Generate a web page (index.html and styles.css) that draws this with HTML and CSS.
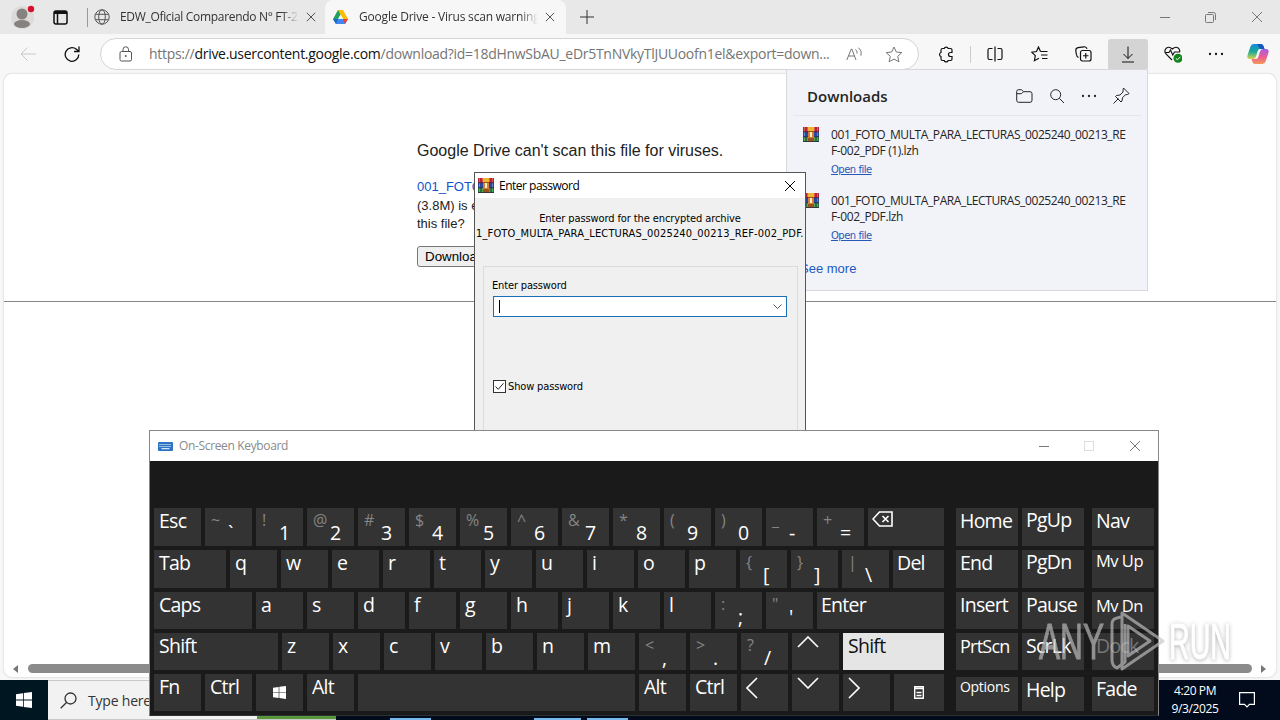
FILE: index.html
```html
<!DOCTYPE html>
<html lang="en">
<head>
	<meta charset="UTF-8">
	<meta name="viewport" content="width=device-width, initial-scale=1.0">
	<title>Google Drive - Virus scan warning</title>
	<link rel="stylesheet" href="styles.css">
</head>
<body>
	<svg class="defs">
		<symbol id="icon_rar" viewBox="0 0 16 15">
			<g stroke="none">
				<rect width="16" height="5" fill="#b3243b"/>
				<path d="M1 0h1v4H1zM4 0h1v4H4zM11 0h1v4h-1zM14 0h1v4h-1z" fill="#dc5a48"/>
				<rect y="5" width="16" height="5" fill="#2a479e"/>
				<path d="M1 5h1v4H1zM14 5h1v4h-1z" fill="#6386cd"/>
				<rect y="10" width="16" height="5" fill="#28733c"/>
				<path d="M1 10h1v4H1zM4 10h1v4H4zM11 10h1v4h-1zM14 10h1v4h-1z" fill="#55a85b"/>
				<rect x="5" width="6" height="15" fill="#99521f"/>
				<rect x="5" width="6" height="4" fill="#edb431"/>
				<rect x="5" y="5" width="6" height="6" fill="#d97c35"/>
				<rect x="7" y="5" width="2" height="5" fill="#fff0c0"/>
				<path d="M0 4.500h5v.7H0zM11 4.500h5v.7h-5zM0 9.500h5v.7H0zM11 9.500h5v.7h-5zM0 14.300h16v.7H0z" fill="#2e2740"/>
			</g>
		</symbol>
		<symbol id="icon_x" viewBox="0 0 12 12"><path d="M1 1l10 10M11 1L1 11"/></symbol>
		<symbol id="icon_dots" viewBox="0 0 16 16"><path d="M2 8h0M8 8h0M14 8h0" stroke-width="2.3" stroke-linecap="round"/></symbol>
		<symbol id="icon_win" viewBox="0 0 16 16"><path d="M0 2.2L7 1.2V7.6H0zM7.8 1L16 0V7.6H7.8zM0 8.4H7V14.8L0 13.8zM7.8 8.4H16V16L7.8 14.9z" fill="#fff" stroke="none"/></symbol>
	</svg>

	<div id="browser">
		<div class="tab_strip">
			<svg class="avatar" width="24" height="24" viewBox="0 0 24 24"><circle cx="11.5" cy="12.5" r="11.5" fill="#dddbd9" stroke="none"/><circle cx="11" cy="9" r="5.5" fill="#858280" stroke="none"/><ellipse cx="11" cy="19" rx="8" ry="4" fill="#858280" stroke="none"/><circle cx="20" cy="4" r="3.2" fill="#d5102b" stroke="none"/></svg>
			<svg class="workspace" width="15" height="15" viewBox="0 0 15 15"><rect x="1" y="1" width="13" height="13" rx="2" stroke-width="1.5"/><path d="M1 2.500h13" stroke-width="3"/><path d="M4.500 3v11" stroke-width="1.5"/></svg>
			<div class="tab tab_first">
				<svg width="16" height="16" viewBox="0 0 16 16" color="#555"><circle cx="8" cy="8" r="7.2"/><ellipse cx="8" cy="8" rx="3.3" ry="7.2"/><path d="M1.5 5.3h13M1.5 10.7h13"/></svg>
				<span class="tab_title">EDW_Oficial Comparendo N° FT-2</span>
				<svg width="10" height="10"><use href="#icon_x"/></svg>
			</div>
			<div class="tab tab_active">
				<svg width="15" height="14" viewBox="0 0 15 14"><path d="M5 0h5L3 14 0 9z" fill="#21a15b" stroke="none"/><path d="M5 0h5l5 9H10z" fill="#fbbc04" stroke="none"/><path d="M3 9h12l-3 5H3z" fill="#4285f4" stroke="none"/><path d="M10 9h5l-3 5z" fill="#ea4335" stroke="none"/><path d="M0 9h5L3 14z" fill="#1967d2" stroke="none"/><path d="M7.500 4.500L10 9H5z" fill="#f7f7f7" stroke="none"/></svg>
				<span class="tab_title">Google Drive - Virus scan warning</span>
				<svg width="10" height="10"><use href="#icon_x"/></svg>
			</div>
			<svg class="new_tab" width="14" height="14" viewBox="0 0 14 14"><path d="M7 0v14M0 7h14"/></svg>
			<div class="window_buttons">
				<svg width="10" height="10" viewBox="0 0 10 10"><path d="M0 5.5h10"/></svg>
				<svg width="11" height="11" viewBox="0 0 11 11"><rect x=".5" y="2.5" width="8" height="8" rx="1"/><path d="M3 .5h5.500q2 0 2 2V8"/></svg>
				<svg width="12" height="12"><use href="#icon_x"/></svg>
			</div>
		</div>

		<div class="toolbar">
			<svg class="back" width="16" height="14" viewBox="0 0 16 14"><path d="M7.500 .5L1 7l6.500 6.500M1 7h15"/></svg>
			<svg class="reload" width="16" height="17" viewBox="0 0 16 17"><path d="M14.800 8.500a6.800 6.800 0 1 1-2.400-5.200L15 5.500M15 .5v5H10" stroke-width="1.3"/></svg>
			<div class="address">
				<svg width="14" height="16" viewBox="0 0 14 16" color="#555"><rect x="1" y="5.500" width="11.500" height="9.500" rx="1.500"/><path d="M4 5.500V3.500a2.700 2.700 0 0 1 5.500 0v2"/><circle cx="6.750" cy="10" r=".6" fill="#555"/></svg>
				<span class="url">https://<b>drive.usercontent.google.com</b>/download?id=18dHnwSbAU_eDr5TnNVkyTlJUUoofn1el&amp;export=down...</span>
				<svg class="read_aloud" width="17" height="15" viewBox="0 0 17 15"><path d="M.8 13L5.300 2h.5L10 13M2.300 9h6.300M9.500 2.500q2 1.500 1.500 4M12.500 .7q4 3 2.500 8"/></svg>
				<svg class="star" width="18" height="17" viewBox="0 0 18 17"><path d="M9 1l2.300 5 5.500.6-4.100 3.700 1.200 5.500L9 13.100l-4.900 2.700 1.200-5.500L1.200 6.600 6.700 6z"/></svg>
			</div>
			<div class="tools">
				<svg width="17" height="17" viewBox="0 0 17 17"><path d="M4.500 2.500h1.700a2.100 2.100 0 0 1 4 0H12.500q1.500 0 1.500 1.500v2.500h-1.500a1.900 1.900 0 0 0 0 4H14V13q0 1.500-1.500 1.500H10.200a2.100 2.100 0 0 1-4 0H4.500Q3 14.500 3 13v-2.500a2.100 2.100 0 0 1 0-4V4Q3 2.500 4.500 2.500z" stroke-width="1.200"/></svg>
				<i class="divider"></i>
				<svg width="16" height="16" viewBox="0 0 16 16"><path d="M5.500 2.500H2.500q-1.500 0-1.500 1.500v8q0 1.500 1.500 1.500h3M10.500 2.500h3q1.500 0 1.500 1.500v8q0 1.500-1.500 1.500h-3M8 .5v15" stroke-width="1.200"/></svg>
				<svg width="17" height="16" viewBox="0 0 17 16"><path d="M9.500 5.500L7.500 1 5.500 5.500.8 6.200l3.500 3.500-.9 5L8 12.300M9.500 5.500h7M10 9h6.500M11 12.500h5.500" stroke-width="1.200"/></svg>
				<svg width="17" height="16" viewBox="0 0 17 16"><rect x="5.500" y="4.500" width="10.500" height="10.500" rx="2" stroke-width="1.200"/><path d="M10.750 7v5.500M8 9.750h5.500M3.500 11.500Q1.800 11 1.300 8L.8 4.500Q.7 2 3 1.600L9 .8q2.500-.3 3 2" stroke-width="1.200"/></svg>
				<span class="download_button"><svg width="14" height="17" viewBox="0 0 14 17"><path d="M7 .5v12M2.500 8L7 12.500 11.500 8M1 16h12"/></svg></span>
				<svg class="health" width="18" height="17" viewBox="0 0 18 17"><path d="M.5 6.500H5L6.500 4l2.300 5L10.500 6H16M8 14L2 8Q-.5 4.500 2.500 2 5.500 0 8.300 3 11.500 0 14.200 2q2 1.800 1.500 4" stroke-width="1.100"/><circle cx="14" cy="12.300" r="4.500" fill="#12831d" stroke="none"/><path d="M11.800 12.300l1.600 1.500 3-3" stroke="#fff"/></svg>
				<svg class="more" width="16" height="16"><use href="#icon_dots"/></svg>
				<svg class="copilot" width="22" height="20" viewBox="0 0 22 20"><defs><linearGradient id="cp_a" x1="0" y1="0" x2="0" y2="1"><stop offset="0" stop-color="#1889dc"/><stop offset=".5" stop-color="#17a99a"/><stop offset="1" stop-color="#d9d34b"/></linearGradient><linearGradient id="cp_b" x1="0" y1="0" x2="0" y2="1"><stop offset="0" stop-color="#a45de4"/><stop offset=".55" stop-color="#ee5d91"/><stop offset="1" stop-color="#f39a55"/></linearGradient></defs><g stroke="none"><path d="M7 0h7q2 0 2.700 2.500L17.500 5H13q-1.700 0-2.300 2L9 12.500Q8.300 15 6 15H3Q-.5 15 .6 11L3.300 3Q4.300 0 7 0z" fill="url(#cp_a)"/><path d="M15 20H8q-2 0-2.700-2.500L4.500 15H9q1.700 0 2.300-2L13 7.500Q13.700 5 16 5h3q3.500 0 2.400 4l-2.700 8Q17.700 20 15 20z" fill="url(#cp_b)"/><path d="M7 0h7q2 0 2.700 2.500L17.500 5H13L10 0z" fill="#1558bd"/></g></svg>
			</div>
		</div>

		<div class="page">
			<div class="warning">
				<h1>Google Drive can't scan this file for viruses.</h1>
				<p><a>001_FOTO_</a></p>
				<p>(3.8M) is e</p>
				<p>this file?</p>
				<button>Download</button>
			</div>
			<hr>
			<div class="scrollbar">
				<svg width="5" height="8" viewBox="0 0 5 8"><path d="M5 0v8L0 4z" fill="#777" stroke="none"/></svg>
				<div class="scroll_thumb"></div>
				<svg width="5" height="8" viewBox="0 0 5 8"><path d="M0 0v8l5-4z" fill="#777" stroke="none"/></svg>
			</div>
		</div>
	</div>

	<div id="downloads">
		<div class="downloads_header">
			<h2>Downloads</h2>
			<svg width="17" height="14" viewBox="0 0 17 14"><path d="M.7 11V2.500Q.7.700 2.500.700H5.500L7.500 2.700H14q2 0 2 2V11.300q0 2-2 2H2.700q-2 0-2-2zM.7 4.700H5.500L7.500 2.700"/></svg>
			<svg width="16" height="16" viewBox="0 0 16 16"><circle cx="6.700" cy="6.700" r="5"/><path d="M10.300 10.300L15 15"/></svg>
			<svg width="16" height="16"><use href="#icon_dots"/></svg>
			<svg width="17" height="17" viewBox="0 0 17 17"><path d="M10.500 1L16 6.500l-1.500 1-2 .2-3 3-.5 3.300-1 1L2.500 9.500l1-1L7 8l3-3 .1-2.500zM5.300 11.700L.5 16.500"/></svg>
		</div>
		<div class="download">
			<svg width="16" height="15"><use href="#icon_rar"/></svg>
			<div>
				<p>001_FOTO_MULTA_PARA_LECTURAS_0025240_00213_RE<br>F-002_PDF (1).lzh</p>
				<a>Open file</a>
			</div>
		</div>
		<div class="download">
			<svg width="16" height="15"><use href="#icon_rar"/></svg>
			<div>
				<p>001_FOTO_MULTA_PARA_LECTURAS_0025240_00213_RE<br>F-002_PDF.lzh</p>
				<a>Open file</a>
			</div>
		</div>
		<a class="see_more">See more</a>
	</div>

	<div id="password_dialog">
		<div class="dialog_title">
			<svg width="16" height="15"><use href="#icon_rar"/></svg>
			<span>Enter password</span>
			<svg class="close" width="12" height="12"><use href="#icon_x"/></svg>
		</div>
		<p class="dialog_prompt">Enter password for the encrypted archive</p>
		<p class="dialog_file">1_FOTO_MULTA_PARA_LECTURAS_0025240_00213_REF-002_PDF.</p>
		<div class="dialog_group">
			<span class="field_label">Enter password</span>
			<div class="combo">
				<i class="caret"></i>
				<svg width="9" height="5" viewBox="0 0 9 5"><path d="M.5.500l4 4 4-4"/></svg>
			</div>
			<div class="checkbox">
				<svg width="13" height="13" viewBox="0 0 13 13"><rect x=".5" y=".5" width="12" height="12" fill="#fff" stroke="#333"/><path d="M2.500 6.500l2.700 2.800 5.300-6" stroke="#222"/></svg>
				<span>Show password</span>
			</div>
		</div>
	</div>

	<div id="taskbar">
		<div class="start"><svg width="16" height="16"><use href="#icon_win"/></svg></div>
		<div class="search">
			<svg width="17" height="17" viewBox="0 0 17 17"><circle cx="10.500" cy="6.500" r="5.500" stroke-width="1.300"/><path d="M6.500 10.500L.7 16.300" stroke-width="1.300"/></svg>
			<span>Type here</span>
			<i class="search_picture"></i>
		</div>
		<div class="tasks"><i></i><i></i><i></i></div>
		<div class="clock">4:20 PM<br>9/3/2025</div>
		<svg class="notify" width="16" height="16" viewBox="0 0 16 16"><path d="M.6.600h14.800v11.800H10.500L8 15 5.500 12.400H.6z" stroke-width="1.200"/></svg>
	</div>

	<div id="keyboard">
		<div class="keyboard_title">
			<svg width="15" height="9" viewBox="0 0 15 9"><rect width="15" height="9" rx="1" fill="#2d74c4" stroke="none"/><path d="M1.500 2.500h12M1.500 4.500h12" stroke="#fff" stroke-dasharray="1 1"/><path d="M3.500 6.700h8" stroke="#fff"/></svg>
			<span>On-Screen Keyboard</span>
			<div class="window_buttons">
				<svg width="10" height="10" viewBox="0 0 10 10"><path d="M0 5.5h10"/></svg>
				<svg width="10" height="10" viewBox="0 0 10 10"><rect x=".5" y=".5" width="9" height="9" stroke="#ddd"/></svg>
				<svg width="12" height="12"><use href="#icon_x"/></svg>
			</div>
		</div>
		<div class="keyboard_body">
			<div class="keys_main">
				<div class="row">
					<div class="key">Esc</div>
					<div class="key dual"><s>~</s>`</div>
					<div class="key dual"><s>!</s>1</div>
					<div class="key dual"><s>@</s>2</div>
					<div class="key dual"><s>#</s>3</div>
					<div class="key dual"><s>$</s>4</div>
					<div class="key dual"><s>%</s>5</div>
					<div class="key dual"><s>^</s>6</div>
					<div class="key dual"><s>&amp;</s>7</div>
					<div class="key dual"><s>*</s>8</div>
					<div class="key dual"><s>(</s>9</div>
					<div class="key dual"><s>)</s>0</div>
					<div class="key dual"><s>_</s>-</div>
					<div class="key dual"><s>+</s>=</div>
					<div class="key fill"><svg width="21" height="16" viewBox="0 0 21 16"><path d="M7.500 1H20v14H7.500L1 8zM10.500 5l6 6M16.500 5l-6 6"/></svg></div>
				</div>
				<div class="row">
					<div class="key w_tab">Tab</div>
					<div class="key">q</div>
					<div class="key">w</div>
					<div class="key">e</div>
					<div class="key">r</div>
					<div class="key">t</div>
					<div class="key">y</div>
					<div class="key">u</div>
					<div class="key">i</div>
					<div class="key">o</div>
					<div class="key">p</div>
					<div class="key dual"><s>{</s>[</div>
					<div class="key dual"><s>}</s>]</div>
					<div class="key dual"><s>|</s>\</div>
					<div class="key fill">Del</div>
				</div>
				<div class="row">
					<div class="key w_caps">Caps</div>
					<div class="key">a</div>
					<div class="key">s</div>
					<div class="key">d</div>
					<div class="key">f</div>
					<div class="key">g</div>
					<div class="key">h</div>
					<div class="key">j</div>
					<div class="key">k</div>
					<div class="key">l</div>
					<div class="key dual"><s>:</s>;</div>
					<div class="key dual"><s>"</s>'</div>
					<div class="key fill">Enter</div>
				</div>
				<div class="row">
					<div class="key w_shift">Shift</div>
					<div class="key">z</div>
					<div class="key">x</div>
					<div class="key">c</div>
					<div class="key">v</div>
					<div class="key">b</div>
					<div class="key">n</div>
					<div class="key">m</div>
					<div class="key dual"><s>&lt;</s>,</div>
					<div class="key dual"><s>&gt;</s>.</div>
					<div class="key dual"><s>?</s>/</div>
					<div class="key"><svg width="22" height="12" viewBox="0 0 22 12"><path d="M1 11L11 1l10 10"/></svg></div>
					<div class="key fill pressed">Shift</div>
				</div>
				<div class="row">
					<div class="key">Fn</div>
					<div class="key">Ctrl</div>
					<div class="key centered"><svg width="13" height="13"><use href="#icon_win"/></svg></div>
					<div class="key">Alt</div>
					<div class="key w_space"></div>
					<div class="key">Alt</div>
					<div class="key">Ctrl</div>
					<div class="key"><svg width="12" height="22" viewBox="0 0 12 22"><path d="M11 1L1 11l10 10"/></svg></div>
					<div class="key"><svg width="22" height="12" viewBox="0 0 22 12"><path d="M1 1l10 10L21 1"/></svg></div>
					<div class="key"><svg width="12" height="22" viewBox="0 0 12 22"><path d="M1 1l10 10L1 21"/></svg></div>
					<div class="key fill centered"><svg width="10" height="13" viewBox="0 0 10 13"><path d="M.6.600h8.800v11.800H.6zM.5 2.500h9M2.500 6.500h5M2.500 9.500h5"/></svg></div>
				</div>
			</div>
			<div class="keys_side">
				<div class="key">Home</div><div class="key up">PgUp</div><div class="key">Nav</div>
				<div class="key">End</div><div class="key up">PgDn</div><div class="key small">Mv Up</div>
				<div class="key">Insert</div><div class="key">Pause</div><div class="key small low">Mv Dn</div>
				<div class="key medium">PrtScn</div><div class="key">ScrLk</div><div class="key disabled">Dock</div>
				<div class="key tiny">Options</div><div class="key">Help</div><div class="key up">Fade</div>
			</div>
		</div>
	</div>

	<svg id="watermark" width="204" height="68" viewBox="0 0 204 68">
		<text x="4" y="51" textLength="65" lengthAdjust="spacingAndGlyphs">ANY</text>
		<path class="mark_line" d="M86 9l-4 1q-5 1-5 6v36q0 6 5 8l8-6V16"/>
		<path class="mark_line" d="M87 5v56l41-28zM93 18v30l22-15z"/>
		<text class="mark_run" x="134" y="51" textLength="62" lengthAdjust="spacingAndGlyphs">RUN</text>
	</svg>
</body>
</html>
```

FILE: styles.css
```css
* {
	margin: 0;
	padding: 0;
	box-sizing: border-box;
}
html, body {
	width: 100%;
	height: 100%;
	overflow: hidden;
	font-family: "Open Sans", "Noto Sans", sans-serif;
}
body {
	position: relative;
	background: #f3f4fa;
}
svg {
	display: block;
	flex: none;
	fill: none;
	stroke: currentColor;
}
svg.defs {
	display: none;
}

/* browser */
#browser {
	height: 680px;
	display: flex;
	flex-direction: column;
	background: #f7f7f7;
}
.tab_strip {
	height: 34px;
	display: flex;
	align-items: center;
	background: #e8e8e8;
	color: #333;
	font-size: 12px;
}
.avatar {
	margin: -1px 0 0 11px;
}
.workspace {
	margin-left: 18px;
	color: #111;
}
.tab {
	display: flex;
	align-items: center;
	height: 34px;
}
.tab_first {
	width: 239px;
	margin-left: 18px;
	padding-left: 8px;
	background: linear-gradient(#999, #999) 1px 8px / 1px 19px no-repeat;
}
.tab_active {
	width: 241px;
	padding-left: 8px;
	background: #f7f7f7;
	border-radius: 8px 8px 0 0;
}
.tab_title {
	width: 179px;
	margin-left: 10px;
	margin-right: 7px;
	padding-bottom: 1px;
	overflow: hidden;
	white-space: nowrap;
	letter-spacing: -0.32px;
	-webkit-mask-image: linear-gradient(90deg, #000 90%, transparent);
}
.tab_active .tab_title {
	margin-left: 11px;
	letter-spacing: -0.2px;
}
.new_tab {
	margin-left: 14px;
}
.window_buttons {
	display: flex;
	align-items: center;
	gap: 35px;
	margin-left: auto;
	margin-right: 17px;
	color: #777;
}

.toolbar {
	height: 40px;
	display: flex;
	align-items: center;
	color: #111;
}
.back {
	margin-left: 20px;
	color: #c8c8c8;
}
.reload {
	margin-left: 28px;
}
.address {
	width: 819px;
	height: 32px;
	margin-left: 20px;
	padding-left: 18px;
	display: flex;
	align-items: center;
	background: #fff;
	border: 1px solid #d4d4d4;
	border-radius: 16px;
}
.url {
	width: 681px;
	margin-left: 16px;
	padding-bottom: 1px;
	white-space: nowrap;
	font-size: 14px;
	letter-spacing: -0.29px;
	color: #757575;
}
.url b {
	font-weight: normal;
	color: #111;
}
.read_aloud {
	margin-left: 16px;
	color: #777;
}
.star {
	margin-left: 22px;
	color: #777;
}
.tools {
	display: flex;
	align-items: center;
	margin-left: 19px;
}
.divider {
	width: 1px;
	height: 17px;
	margin: 0 16px 0 15px;
	background: #ccc;
}
.tools > svg + svg {
	margin-left: 27.5px;
}
.download_button {
	width: 40px;
	height: 31px;
	margin-left: 16px;
	display: grid;
	place-content: center;
	background: #d4d4d4;
	border-radius: 3px;
}
.tools > .health {
	margin-left: 16px;
}
.tools > .more {
	margin-left: 26px;
}
.tools > .copilot {
	margin-left: 23px;
}

.page {
	flex: 1;
	margin: 0 4px 3px;
	display: flex;
	flex-direction: column;
	background: #fff;
	border-radius: 8px;
	box-shadow: 0 0 2px #bbb;
	font-family: "Liberation Sans", Arial, sans-serif;
	color: #222;
}
.warning {
	height: 227px;
	padding: 66px 0 0 413px;
	font-size: 13px;
}
.warning h1 {
	margin-bottom: 16px;
	font-size: 16px;
	line-height: 22px;
	font-weight: normal;
}
.warning p {
	line-height: 18px;
}
.warning p:first-of-type {
	margin-bottom: 1px;
}
.warning a {
	color: #15c;
}
.warning button {
	height: 21px;
	margin-top: 13px;
	padding: 0 7px;
	font: 13.33px "Liberation Sans", Arial, sans-serif;
	color: #000;
	background: #efefef;
	border: 1px solid #767676;
	border-radius: 3px;
}
.page hr {
	border: 0;
	border-top: 1px solid #888;
}
.scrollbar {
	height: 17px;
	margin-top: auto;
	display: flex;
	align-items: center;
	justify-content: space-between;
	padding: 0 10px 0 9px;
}
.scroll_thumb {
	width: 1224px;
	height: 9px;
	background: #8b8b8b;
	border-radius: 5px;
}

/* downloads flyout */
#downloads {
	position: absolute;
	left: 786px;
	top: 69px;
	width: 362px;
	height: 222px;
	background: #f1f3f8;
	border: 1px solid #d6d8dd;
	color: #242424;
}
.downloads_header {
	height: 46px;
	margin: 0 6px 11px;
	padding: 6px 11px 0 14px;
	display: flex;
	align-items: center;
	gap: 16px;
	border-bottom: 1px solid #e3e6ea;
}
.downloads_header h2 {
	margin-right: auto;
	font-size: 15px;
	font-weight: 600;
	letter-spacing: 0;
}
.download {
	height: 66px;
	display: flex;
	gap: 12px;
	padding-left: 16px;
}
.download p {
	font-size: 12px;
	line-height: 16px;
	letter-spacing: -0.4px;
	white-space: nowrap;
}
.download p::first-line {
	letter-spacing: -0.4px;
}
.download a {
	display: block;
	margin-top: 4px;
	font: 10px/14px "DejaVu Sans", sans-serif;
	letter-spacing: -0.5px;
	color: #2758b8;
	text-decoration: underline;
}
.see_more {
	display: block;
	margin-left: 13px;
	font: 13px/20px "Liberation Sans", Arial, sans-serif;
	color: #2059c4;
}

/* archive password prompt */
#password_dialog {
	position: absolute;
	left: 474px;
	top: 172px;
	width: 332px;
	height: 300px;
	background: #f0f0f0;
	border: 1px solid #555;
	font: 11px/15px "DejaVu Sans Condensed", "DejaVu Sans", sans-serif;
	color: #000;
	white-space: nowrap;
}
.dialog_title {
	height: 25px;
	padding: 0 9px 0 3px;
	display: flex;
	align-items: center;
	gap: 5px;
	background: #fff;
	font: 12px "Open Sans", sans-serif;
	letter-spacing: -0.5px;
}
.dialog_title span {
	padding-bottom: 1px;
}
.dialog_title .close {
	margin-left: auto;
}
.dialog_prompt {
	margin-top: 13px;
	text-align: center;
	letter-spacing: -0.1px;
}
.dialog_file {
	padding-left: 1px;
	letter-spacing: 0.16px;
}
.dialog_group {
	height: 220px;
	margin: 25px 7px 0 8px;
	padding: 11px 10px 0 8px;
	border: 1px solid #dcdcdc;
	letter-spacing: -0.15px;
}
.field_label {
	display: block;
}
.combo {
	height: 21px;
	margin: 3px 0 0 1px;
	padding: 0 4px 0 5px;
	display: flex;
	align-items: center;
	justify-content: space-between;
	background: #fff;
	border: 1px solid #1a6fb5;
	color: #555;
}
.caret {
	width: 1px;
	height: 13px;
	background: #000;
}
.checkbox {
	display: flex;
	align-items: center;
	gap: 2px;
	margin: 62px 0 0 1px;
}

/* taskbar */
#taskbar {
	position: absolute;
	left: 0;
	top: 680px;
	width: 100%;
	height: 40px;
	display: flex;
	align-items: center;
	background: #010b1c;
	color: #fff;
}
.start {
	width: 48px;
	height: 40px;
	display: grid;
	place-content: center;
	background: #001722;
}
.search {
	width: 288px;
	height: 40px;
	padding-left: 12px;
	display: flex;
	align-items: center;
	gap: 11px;
	background: #f2f2f2;
	border: 1px solid #c8c8c8;
	border-left: 0;
	border-right: 0;
	color: #333;
	font-size: 14px;
	letter-spacing: -0.2px;
	white-space: nowrap;
}
.search_picture {
	width: 79px;
	height: 38px;
	margin-left: auto;
	background: #58963b;
}
.tasks {
	height: 40px;
	margin-left: 54px;
	display: flex;
	align-items: flex-end;
}
.tasks i {
	width: 41px;
	height: 2px;
	background: #76b9ed;
}
.tasks i:nth-child(2) {
	width: 47px;
	margin: 0 6px 0 103px;
}
.clock {
	width: 60px;
	margin-left: auto;
	font-size: 12px;
	line-height: 18px;
	letter-spacing: -0.4px;
	text-align: center;
}
.notify {
	margin: 0 25px 0 14px;
}

/* on-screen keyboard */
#keyboard {
	position: absolute;
	left: 149px;
	top: 430px;
	width: 1010px;
	height: 286px;
	background: #1a1a1a;
	border: 1px solid #888;
	border-bottom-color: #2b3032;
}
.keyboard_title {
	height: 30px;
	padding-left: 8px;
	display: flex;
	align-items: center;
	gap: 6px;
	background: #fff;
	color: #8a8a8a;
	font-size: 12px;
	letter-spacing: -0.35px;
}
.keyboard_title span {
	padding-bottom: 1px;
}
.keyboard_body {
	display: flex;
	gap: 12px;
	padding: 47px 4px 0;
}
.keys_main {
	width: 790px;
	display: flex;
	flex-direction: column;
	gap: 4px;
}
.row {
	display: flex;
	gap: 4px;
}
.key {
	width: 47px;
	height: 37px;
	flex: none;
	padding-left: 5px;
	background: #333;
	color: #fff;
	font-size: 19.5px;
	line-height: 26px;
	letter-spacing: -0.75px;
	white-space: nowrap;
}
.row:nth-child(-n + 2) .key {
	height: 38px;
}
.key.fill {
	flex: 1;
	padding-left: 4px;
}
.key svg {
	margin-top: 3px;
	stroke-width: 1.6;
}
.key.dual {
	display: flex;
	padding-left: 6px;
	line-height: 50px;
}
.key s {
	width: 17px;
	font-size: 16px;
	line-height: 25px;
	color: #858585;
	text-decoration: none;
}
.key.centered {
	display: grid;
	place-content: center;
	padding: 0;
}
.key.centered svg {
	margin-top: 0;
}
.key.pressed {
	padding-left: 5px;
	background: #e5e5e5;
	color: #111;
}
.key.w_tab {
	width: 72px;
}
.key.w_caps {
	width: 98px;
}
.key.w_shift {
	width: 124px;
}
.key.w_space {
	width: 277px;
}
.keys_side {
	display: grid;
	grid-template-columns: 62px 62px 62px;
	grid-template-rows: 38px 38px 37px 37px 37px;
	gap: 4px;
}
.keys_side .key {
	width: 62px;
	height: auto;
	padding-left: 4px;
}
.keys_side .key:nth-child(3n) {
	margin-left: 4px;
	margin-right: -4px;
}
.keys_side .key:nth-child(n + 13) {
	margin-top: 3px;
}
.key.up {
	line-height: 24px;
}
.key.medium {
	font-size: 18px;
}
.key.small {
	font-size: 16.5px;
	line-height: 22px;
	letter-spacing: -0.5px;
}
.key.small.low {
	line-height: 27px;
}
.key.tiny {
	font-size: 14px;
	line-height: 19px;
	letter-spacing: -0.3px;
}
.key.disabled {
	color: #777;
}

#watermark {
	position: absolute;
	left: 1035px;
	top: 608px;
	opacity: 0.65;
}
#watermark text {
	font: 50px "Liberation Sans Narrow", "Liberation Sans", sans-serif;
	fill: #c4c4c4;
	stroke: #c4c4c4;
	stroke-width: 1;
}
#watermark .mark_run {
	fill: #fff;
	stroke: #fff;
	filter: drop-shadow(0 1px 2px #888);
}
.mark_line {
	stroke: #c4c4c4;
	stroke-width: 3;
	stroke-linejoin: round;
}
```
